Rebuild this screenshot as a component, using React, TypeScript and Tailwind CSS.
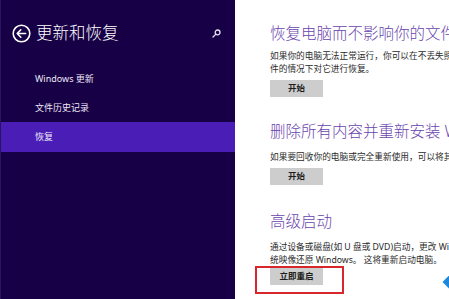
const font = { fontFamily: '"Noto Sans", "Noto Sans CJK SC", sans-serif' };

function BackIcon() {
  return (
    <svg width="19" height="19" viewBox="0 0 19 19" fill="none" stroke="white" strokeWidth="1.6">
      <circle cx="9.5" cy="9.5" r="8.3" />
      <path d="M5.2 9.5h8.4M8.8 5.8L5.2 9.5l3.6 3.7" strokeLinecap="round" strokeLinejoin="round" />
    </svg>
  );
}

function SearchIcon() {
  return (
    <svg width="9" height="9" viewBox="0 0 9 9" fill="none" stroke="#e6e0f4" strokeWidth="1.3">
      <circle cx="5.6" cy="3.4" r="2.4" />
      <path d="M3.9 5.1L1 8" strokeLinecap="round" />
    </svg>
  );
}

const navItems = [
  { label: 'Windows 更新', active: false, h: 'h-[29px]' },
  { label: '文件历史记录', active: false, h: 'h-[29px]' },
  { label: '恢复', active: true, h: 'h-[30px]' },
];

function Section({
  title,
  lines,
  button,
  headTop,
  bodyGap,
  btnGap,
  marked,
}: {
  title: string;
  lines: string[];
  button: string;
  headTop: string;
  bodyGap: string;
  btnGap: string;
  marked?: boolean;
}) {
  return (
    <div className={headTop}>
      <h2 className="whitespace-nowrap text-[15.5px] font-light leading-[20px] text-[#6a45ad]">{title}</h2>
      <div className={`${bodyGap} text-[8.7px] leading-[13px] text-[#2a2a2a]`}>
        {lines.map((l) => (
          <p key={l} className="whitespace-nowrap">{l}</p>
        ))}
      </div>
      <div className={`relative ${btnGap} w-[53px]`}>
        <button
          type="button"
          className="flex h-[17px] w-[53px] items-center justify-center bg-[#cdcdcd] text-[8.5px] font-bold text-[#1e1e1e]"
        >
          {button}
        </button>
        {marked && (
          <div className="absolute left-[-15px] top-[-2px] h-[28px] w-[89px] border-2 border-[#d8262d]" />
        )}
      </div>
    </div>
  );
}

export default function App() {
  return (
    <div className="flex h-[299px] w-[449px] overflow-hidden bg-white" style={font}>
      <aside className="flex h-full w-[235px] shrink-0 flex-col border-l border-[#2a1460] bg-[#170045]">
        <div className="flex h-[64px] items-center pb-[2px] pl-[11px] pr-[14px] pt-[4px]">
          <BackIcon />
          <h1 className="ml-[5px] flex-1 text-[16.5px] font-light text-white">更新和恢复</h1>
          <SearchIcon />
        </div>
        <nav className="flex flex-col">
          {navItems.map((item) => (
            <div
              key={item.label}
              className={`flex ${item.h} items-center pl-[34px] text-[9px] text-[#ece8f6] ${
                item.active ? 'bg-[#4a1eb6]' : ''
              }`}
            >
              {item.label}
            </div>
          ))}
        </nav>
      </aside>

      <main className="relative min-w-0 flex-1 overflow-hidden pl-[35px]">
        <Section
          title="恢复电脑而不影响你的文件"
          lines={['如果你的电脑无法正常运行，你可以在不丢失照片、音乐、视频和其他个人文', '件的情况下对它进行恢复。']}
          button="开始"
          headTop="mt-[23px]"
          bodyGap="mt-[7px]"
          btnGap="mt-[4px]"
        />
        <Section
          title="删除所有内容并重新安装 Windows"
          lines={['如果要回收你的电脑或完全重新使用，可以将其还原为出厂设置。']}
          button="开始"
          headTop="mt-[24px]"
          bodyGap="mt-[10px]"
          btnGap="mt-[4px]"
        />
        <Section
          title="高级启动"
          lines={['通过设备或磁盘(如 U 盘或 DVD)启动，更改 Windows 启动设置，或者从系', '统映像还原 Windows。 这将重新启动电脑。']}
          button="立即重启"
          headTop="mt-[26px]"
          bodyGap="mt-[10px]"
          btnGap="mt-[1px]"
          marked
        />
        <div className="absolute right-[-8px] top-[276px] h-[12px] w-[12px] rotate-45 bg-[#1b88dc]" />
      </main>
    </div>
  );
}
